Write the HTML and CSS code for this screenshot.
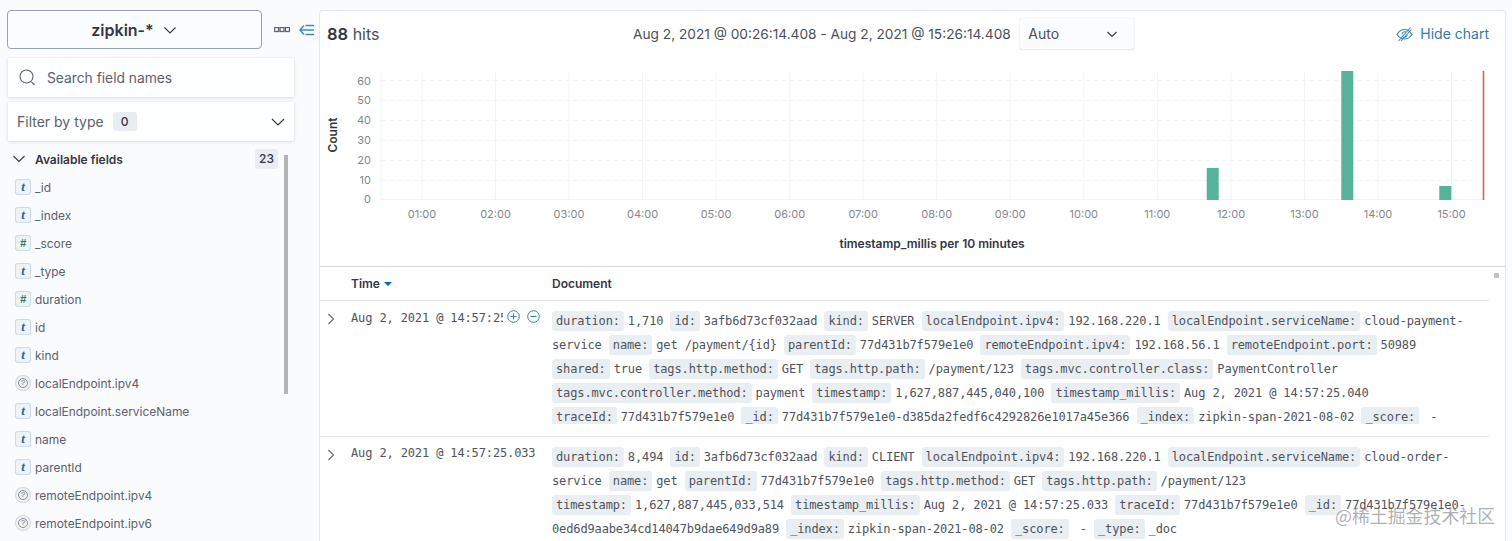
FILE: index.html
```html
<!DOCTYPE html>
<html lang="en">
<head>
<meta charset="utf-8">
<title>Discover</title>
<link rel="stylesheet" href="styles.css">
</head>
<body>
<div class="app">
  <aside class="sidebar">
    <div class="index-row">
      <button class="index-btn"><span>zipkin-*</span>
        <svg class="ico-chev" width="14" height="14" viewBox="0 0 14 14"><path d="M1.5 4.5 7 10l5.5-5.5"/></svg>
      </button>
      <svg class="ico-dots" width="16" height="6" viewBox="0 0 16 6"><rect x=".5" y=".5" width="4" height="4"/><rect x="6" y=".5" width="4" height="4"/><rect x="11.5" y=".5" width="4" height="4"/></svg>
      <svg class="ico-collapse" width="16" height="14" viewBox="0 0 16 14"><path d="M5 2.5 1 7l4 4.5M1 7h14M6.500 2.500H15M6.500 11.500H15"/></svg>
    </div>
    <div class="box search">
      <svg class="ico-search" width="17" height="17" viewBox="0 0 17 17"><circle cx="7.500" cy="7.500" r="6.500"/><path d="m12.500 13 3 3"/></svg>
      <span>Search field names</span>
    </div>
    <div class="box filter">
      <span>Filter by type</span><b class="count zero">0</b>
      <svg class="ico-chev filter-chev" width="14" height="14" viewBox="0 0 14 14"><path d="M1 4 7 10l6-6"/></svg>
    </div>
    <div class="avail">
      <svg class="ico-chev" width="12" height="12" viewBox="0 0 12 12"><path d="M.5 3 6 8.500 11.500 3"/></svg>
      <strong>Available fields</strong><b class="count">23</b>
    </div>
    <div class="fields">
      <div class="thumb"></div>
      <div class="field"><i class="ft ft-t">t</i>_id</div>
      <div class="field"><i class="ft ft-t">t</i>_index</div>
      <div class="field"><i class="ft ft-n">#</i>_score</div>
      <div class="field"><i class="ft ft-t">t</i>_type</div>
      <div class="field"><i class="ft ft-n">#</i>duration</div>
      <div class="field"><i class="ft ft-t">t</i>id</div>
      <div class="field"><i class="ft ft-t">t</i>kind</div>
      <div class="field"><i class="ft ft-q"><em>?</em></i>localEndpoint.ipv4</div>
      <div class="field"><i class="ft ft-t">t</i>localEndpoint.serviceName</div>
      <div class="field"><i class="ft ft-t">t</i>name</div>
      <div class="field"><i class="ft ft-t">t</i>parentId</div>
      <div class="field"><i class="ft ft-q"><em>?</em></i>remoteEndpoint.ipv4</div>
      <div class="field"><i class="ft ft-q"><em>?</em></i>remoteEndpoint.ipv6</div>
    </div>
  </aside>
  <main class="main">
    <header class="top">
      <div class="hits"><b>88</b> hits</div>
      <div class="range">Aug 2, 2021 @ 00:26:14.408 - Aug 2, 2021 @ 15:26:14.408</div>
      <div class="auto"><span>Auto</span>
        <svg class="ico-chev" width="10" height="10" viewBox="0 0 10 10"><path d="M.5 3 5 7.500 9.500 3"/></svg>
      </div>
      <div class="hide">
        <svg class="ico-eye" width="17" height="16" viewBox="0 0 17 16"><path d="M1 8.500C3 5 5.500 3.500 8.500 3.500s5.500 1.500 7.500 5c-2 3-4.500 4.500-7.500 4.500S3 11.500 1 8.500Z"/><path d="M6 8.500a2.800 2.800 0 0 1 4-2.500M11 8a2.800 2.800 0 0 1-4 3M2.500 15 14.500 1.500M5 15 15.500 3.500"/></svg>
        <span>Hide chart</span>
      </div>
    </header>
    <svg class="chart" width="1185" height="206" viewBox="320 60 1185 206">
      <g class="grid">
        <path d="M381 71V199.500M422 71V199.500M495.500 71V199.500M569 71V199.500M642.600 71V199.500M716 71V199.500M789.700 71V199.500M863.200 71V199.500M936.700 71V199.500M1010.200 71V199.500M1083.800 71V199.500M1157.300 71V199.500M1231 71V199.500M1304.500 71V199.500M1378 71V199.500M1451.500 71V199.500"/>
        <path class="dash" d="M381 80.500H1472M381 100.500H1472M381 120.500H1472M381 140.500H1472M381 160.500H1472M381 180.500H1472"/>
        <path d="M381 199.500H1484"/>
      </g>
      <g class="bars">
        <rect x="1206.700" y="168" width="12" height="32"/>
        <rect x="1341.300" y="71" width="12" height="129"/>
        <rect x="1439.300" y="186" width="12" height="14"/>
      </g>
      <rect class="now" x="1482.700" y="71" width="1.600" height="129"/>
      <g class="ylab">
        <text x="371" y="84.500">60</text><text x="371" y="104">50</text><text x="371" y="124">40</text><text x="371" y="144">30</text><text x="371" y="164">20</text><text x="371" y="184">10</text><text x="371" y="203">0</text>
      </g>
      <g class="xlab">
        <text x="422" y="218">01:00</text><text x="495.500" y="218">02:00</text><text x="569" y="218">03:00</text><text x="642.600" y="218">04:00</text><text x="716" y="218">05:00</text><text x="789.700" y="218">06:00</text><text x="863.200" y="218">07:00</text><text x="936.700" y="218">08:00</text><text x="1010.200" y="218">09:00</text><text x="1083.800" y="218">10:00</text><text x="1157.300" y="218">11:00</text><text x="1231" y="218">12:00</text><text x="1304.500" y="218">13:00</text><text x="1378" y="218">14:00</text><text x="1451.500" y="218">15:00</text>
      </g>
      <text class="axis" transform="translate(337 135) rotate(-90)">Count</text>
      <text class="axis" x="932" y="247.500">timestamp_millis per 10 minutes</text>
    </svg>
    <section class="table">
      <div class="thead">
        <div class="th-time">Time <svg class="caret" width="8" height="4" viewBox="0 0 8 4"><path d="M0 0h8L4 4Z"/></svg></div>
        <div class="th-doc">Document</div>
      </div>
      <article class="row">
        <svg class="ico-exp" width="8" height="12" viewBox="0 0 8 12"><path d="M1.500 1 6.500 6l-5 5"/></svg>
        <div class="time-cell">
          <div class="time time-clip">Aug 2, 2021 @ 14:57:25.040</div>
          <svg class="ico-filter" width="13" height="13" viewBox="0 0 13 13"><circle cx="6.500" cy="6.500" r="5.800"/><path d="M3.500 6.500h6M6.500 3.500v6"/></svg>
          <svg class="ico-filter" width="13" height="13" viewBox="0 0 13 13"><circle cx="6.500" cy="6.500" r="5.800"/><path d="M3.500 6.500h6"/></svg>
        </div>
        <div class="doc"><span class="k">duration:</span><span class="v">1,710</span> <span class="k">id:</span><span class="v">3afb6d73cf032aad</span> <span class="k">kind:</span><span class="v">SERVER</span> <span class="k">localEndpoint.ipv4:</span><span class="v">192.168.220.1</span> <span class="k">localEndpoint.serviceName:</span><span class="v">cloud-payment-service</span> <span class="k">name:</span><span class="v">get /payment/{id}</span> <span class="k">parentId:</span><span class="v">77d431b7f579e1e0</span> <span class="k">remoteEndpoint.ipv4:</span><span class="v">192.168.56.1</span> <span class="k">remoteEndpoint.port:</span><span class="v">50989</span> <span class="k">shared:</span><span class="v">true</span> <span class="k">tags.http.method:</span><span class="v">GET</span> <span class="k">tags.http.path:</span><span class="v">/payment/123</span> <span class="k">tags.mvc.controller.class:</span><span class="v">PaymentController</span> <span class="k">tags.mvc.controller.method:</span><span class="v">payment</span> <span class="k">timestamp:</span><span class="v">1,627,887,445,040,100</span> <span class="k">timestamp_millis:</span><span class="v">Aug 2, 2021 @ 14:57:25.040</span> <span class="k">traceId:</span><span class="v">77d431b7f579e1e0</span> <span class="k">_id:</span><span class="v">77d431b7f579e1e0-d385da2fedf6c4292826e1017a45e366</span> <span class="k">_index:</span><span class="v">zipkin-span-2021-08-02</span> <span class="k">_score:</span><span class="v"> -</span></div>
      </article>
      <article class="row">
        <svg class="ico-exp" width="8" height="12" viewBox="0 0 8 12"><path d="M1.500 1 6.500 6l-5 5"/></svg>
        <div class="time-cell">
          <div class="time">Aug 2, 2021 @ 14:57:25.033</div>
        </div>
        <div class="doc"><span class="k">duration:</span><span class="v">8,494</span> <span class="k">id:</span><span class="v">3afb6d73cf032aad</span> <span class="k">kind:</span><span class="v">CLIENT</span> <span class="k">localEndpoint.ipv4:</span><span class="v">192.168.220.1</span> <span class="k">localEndpoint.serviceName:</span><span class="v">cloud-order-service</span> <span class="k">name:</span><span class="v">get</span> <span class="k">parentId:</span><span class="v">77d431b7f579e1e0</span> <span class="k">tags.http.method:</span><span class="v">GET</span> <span class="k">tags.http.path:</span><span class="v">/payment/123</span> <span class="k">timestamp:</span><span class="v">1,627,887,445,033,514</span> <span class="k">timestamp_millis:</span><span class="v">Aug 2, 2021 @ 14:57:25.033</span> <span class="k">traceId:</span><span class="v">77d431b7f579e1e0</span> <span class="k">_id:</span><span class="v">77d431b7f579e1e0-0ed6d9aabe34cd14047b9dae649d9a89</span> <span class="k">_index:</span><span class="v">zipkin-span-2021-08-02</span> <span class="k">_score:</span><span class="v"> -</span> <span class="k">_type:</span><span class="v">_doc</span></div>
      </article>
      <div class="tiny-scroll"></div>
    </section>
  </main>
</div>
<div class="watermark">@稀土掘金技术社区</div>
</body>
</html>
```
FILE: styles.css
```css
* { box-sizing: border-box; }
html, body { margin: 0; height: 541px; overflow: hidden; }
body { background: #fafbfd; color: #343741; font-family: Inter, "Noto Sans", sans-serif; position: relative; }
svg { display: block; fill: none; flex: none; }

.app { display: flex; height: 541px; }

/* Sidebar */
.sidebar { width: 319px; flex: none; padding: 10px 0 0 7px; }
.index-row { display: flex; align-items: center; height: 39px; }
.index-btn { width: 255px; height: 39px; display: flex; align-items: center; justify-content: center; gap: 9px; padding: 0 1px 0 0; border: 1px solid #98a2b3; border-radius: 4px; background: #fbfcfd; color: #343741; font: 600 16px Inter, sans-serif; }
.ico-chev path { stroke: #343741; stroke-width: 1.100; }
.ico-dots { margin-left: 12px; }
.ico-dots rect { stroke: #5f6670; stroke-width: 1.300; }
.ico-collapse { margin-left: 9px; }
.ico-collapse path { stroke: #3f8cc4; stroke-width: 1.500; }

.box { display: flex; align-items: center; width: 286px; height: 39px; margin-left: 1px; background: #fdfeff; box-shadow: 0 1px 3px rgba(60, 70, 90, .16), 0 0 1px rgba(60, 70, 90, .12); color: #5c616c; font-size: 14px; }
.search { margin-top: 9px; padding-left: 11px; gap: 11px; font-size: 13.800px; }
.ico-search circle, .ico-search path { stroke: #5d6570; stroke-width: 1.100; }
.filter { margin-top: 5px; padding-left: 9px; }
.filter-chev { margin-left: auto; margin-right: 9px; }
.count { background: #e9edf3; border-radius: 3px; font-size: 12px; font-weight: 500; color: #343741; text-align: center; }
.zero { width: 24px; height: 19px; line-height: 19px; margin-left: 9px; }
.avail { display: flex; align-items: center; height: 20px; margin-top: 8px; padding-left: 6px; font-size: 12px; position: relative; }
.avail strong { margin-left: 10px; font-weight: 600; color: #343741; }
.avail .count { position: absolute; left: 248px; top: 0; width: 23px; height: 20px; line-height: 19px; }
.fields { position: relative; margin-top: 4.400px; padding-left: 8px; }
.thumb { position: absolute; left: 277px; top: -18px; width: 4px; height: 239px; background: #b3b4b6; }
.field { display: flex; align-items: center; height: 28px; font-size: 11.950px; color: #5c616c; }
.ft { flex: none; width: 16px; height: 16px; margin-right: 4px; border-radius: 3px; display: flex; align-items: center; justify-content: center; font: italic 700 13px "Liberation Serif", serif; box-shadow: inset 0 0 0 1px rgba(90, 120, 160, .2); }
.ft-t { background: #ecf3f9; color: #2f5f8f; }
.ft-n { background: #ebf5f1; color: #38735f; font: italic 700 11px "Liberation Sans", sans-serif; }
.ft-q { background: #f0f1f3; border-radius: 50%; color: #69707d; }
.ft-q em { width: 10px; height: 10px; border: 1px solid #8b8f98; border-radius: 50%; font: 400 8px/8px "Liberation Sans", sans-serif; text-align: center; }

/* Main */
.main { flex: 1; min-width: 0; margin: 10px 6px 0 0; height: 531px; background: #fff; border: solid #e6e8ed; border-width: 1px 1px 0 1px; border-radius: 4px 4px 0 0; overflow: hidden; position: relative; }
.top { display: flex; align-items: center; height: 49px; padding: 0 16px 4px 7px; }
.hits { width: 306px; flex: none; font-size: 16px; color: #4b4f59; }
.hits b { font-size: 16.500px; font-weight: 600; color: #343741; }
.range { font-size: 13.700px; color: #4b4f59; white-space: nowrap; }
.auto { display: flex; align-items: center; justify-content: space-between; width: 114px; height: 31px; margin-left: 9.500px; padding: 0 17px 0 8px; background: #fbfcfd; box-shadow: 0 0 1px rgba(60, 70, 90, .3), 0 1px 2px rgba(60, 70, 90, .1); border-radius: 2px; font-size: 14px; color: #4b4f59; }
.hide { display: flex; align-items: center; gap: 7px; margin-left: auto; color: #3379b5; font-size: 14px; }
.ico-eye path { stroke: #3c87bf; stroke-width: 1.100; }

.chart { display: block; }
.grid path { stroke: #f2f3f5; stroke-width: 1; }
.grid .dash { stroke-dasharray: 5 3; }
.bars rect { fill: #54b399; }
.now { fill: #d9605a; }
.chart text { font-family: Inter, sans-serif; }
.ylab text { fill: #84888f; font-size: 11px; text-anchor: end; }
.xlab text { fill: #84888f; font-size: 11px; text-anchor: middle; }
.chart .axis { fill: #343741; font-size: 12px; font-weight: 600; text-anchor: middle; }

/* Table */
.table { position: relative; border-top: 1px solid #d3d6db; }
.thead { display: flex; align-items: center; height: 34px; margin-right: 16px; border-bottom: 1px solid #dfe2e6; font-size: 12px; font-weight: 600; color: #343741; }
.th-time { display: flex; align-items: center; gap: 4px; width: 232px; padding-left: 31px; }
.caret path { fill: #006bb4; }
.row { display: flex; height: 135.500px; margin-right: 16px; border-bottom: 1px solid #e6e8eb; font: 12px "DejaVu Sans Mono", monospace; letter-spacing: -.13px; color: #4f535c; }
.ico-exp { margin: 12px 0 0 7px; }
.ico-exp path { stroke: #5e636d; stroke-width: 1.100; }
.time-cell { display: flex; align-items: flex-start; width: 217px; flex: none; padding: 8.500px 0 0 16px; }
.time { height: 16px; line-height: 16px; white-space: nowrap; }
.time-clip { width: 152px; flex: none; overflow: hidden; }
.ico-filter { margin: 0 7px 0 0; }
.time + .ico-filter { margin-left: 4px; }
.ico-filter circle, .ico-filter path { stroke: #2f80bc; stroke-width: 1; }
.doc { width: 926px; flex: none; margin-top: 8px; height: 115px; overflow: hidden; line-height: 24px; }
.k { background: #e9eef3; border-radius: 3px; padding: 3px 4px; margin-right: 4px; white-space: nowrap; }
.tiny-scroll { position: absolute; right: 6px; top: 6px; width: 5px; height: 5px; background: #c0c4ca; }

.watermark { position: absolute; left: 1335px; top: 502px; font: 17.900px "Noto Sans CJK SC", sans-serif; color: rgba(90, 95, 105, .5); white-space: nowrap; }
```
